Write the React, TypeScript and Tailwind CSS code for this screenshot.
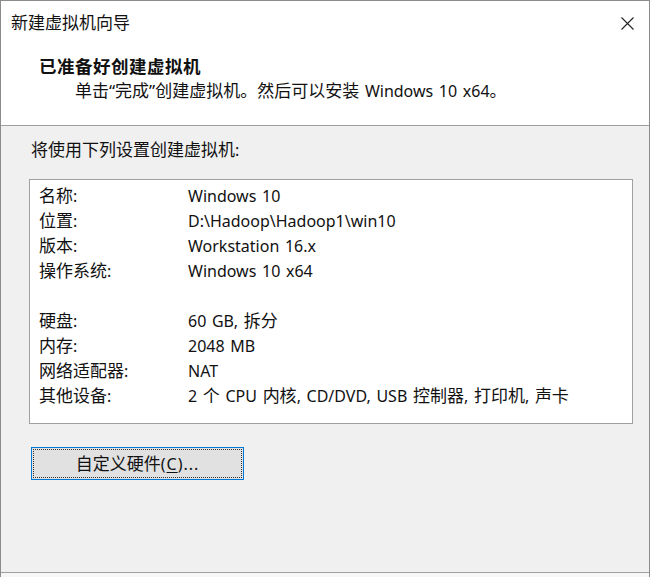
import React from "react";

const rows1: [string, string][] = [
  ["名称:", "Windows 10"],
  ["位置:", "D:\\Hadoop\\Hadoop1\\win10"],
  ["版本:", "Workstation 16.x"],
  ["操作系统:", "Windows 10 x64"],
];
const rows2: [string, string][] = [
  ["硬盘:", "60 GB, 拆分"],
  ["内存:", "2048 MB"],
  ["网络适配器:", "NAT"],
  ["其他设备:", "2 个 CPU 内核, CD/DVD, USB 控制器, 打印机, 声卡"],
];

function T({ s }: { s: string }) {
  const parts = s.match(/[\u3000-\u303f\u4e00-\u9fff\u201c\u201d]+|[^\u3000-\u303f\u4e00-\u9fff\u201c\u201d]+/g) || [];
  return (
    <>
      {parts.map((p, i) =>
        /[\u3000-\u303f\u4e00-\u9fff\u201c\u201d]/.test(p) ? (
          <span key={i} className="text-[17px]">
            {p}
          </span>
        ) : (
          <span key={i} className="[word-spacing:1.5px]">
            {p}
          </span>
        )
      )}
    </>
  );
}

function Row({ label, value }: { label: string; value: string }) {
  return (
    <div className="flex h-[25px] items-center">
      <div className="w-[149px] shrink-0">
        <T s={label} />
      </div>
      <div className="whitespace-nowrap">
        <T s={value} />
      </div>
    </div>
  );
}

export default function App() {
  return (
    <div
      className="w-[650px] h-[577px] overflow-hidden bg-[#f0f0f0] border-l border-t border-r border-[#8c8c8c] flex flex-col text-[16px] text-[#111] leading-[24px]"
      style={{ fontFamily: '"Noto Sans", "Noto Sans CJK SC", sans-serif' }}
    >
      <div className="bg-white">
        <div className="h-[43px] flex items-center justify-between pl-[10px] pr-[15px]">
          <span className="text-[17px]">新建虚拟机向导</span>
          <svg width="13" height="13" viewBox="0 0 13 13" className="mt-[2px]">
            <path d="M0.5 0.5 L12.5 12.5 M12.5 0.5 L0.5 12.5" stroke="#222" strokeWidth="1.1" fill="none" />
          </svg>
        </div>
        <div className="h-[82px] border-b border-[#a0a0a0] pt-[10px] pl-[38px]">
          <div className="font-bold text-[17.5px] leading-[24px] tracking-[0.5px]">已准备好创建虚拟机</div>
          <div className="pl-[36px] mt-[1px]">
            <T s="单击“完成”创建虚拟机。然后可以安装 Windows 10 x64。" />
          </div>
        </div>
      </div>
      <div className="flex-1 px-[28px] pt-[12px] flex flex-col">
        <div className="pl-[2px]">
          <T s="将使用下列设置创建虚拟机:" />
        </div>
        <div className="mt-[17px] w-[604px] h-[245px] bg-white border border-[#a0a0a0] pl-[9px] pt-[3px]">
          {rows1.map(([l, v]) => (
            <Row key={l} label={l} value={v} />
          ))}
          <div className="h-[25px]" />
          {rows2.map(([l, v]) => (
            <Row key={l} label={l} value={v} />
          ))}
        </div>
        <button className="mt-[23px] ml-[2px] w-[213px] h-[33px] bg-[#e1e1e1] border border-[#0078d7] p-[1px]">
          <div className="w-full h-full border border-dotted border-[#333] flex items-center justify-center">
            <span>
              <T s="自定义硬件" />
              <span className="tracking-[1px]">
                (<span className="underline underline-offset-2">C</span>)...
              </span>
            </span>
          </div>
        </button>
      </div>
      <div className="h-[5px] border-t border-[#a0a0a0] bg-[#f7f7f7]" />
    </div>
  );
}
